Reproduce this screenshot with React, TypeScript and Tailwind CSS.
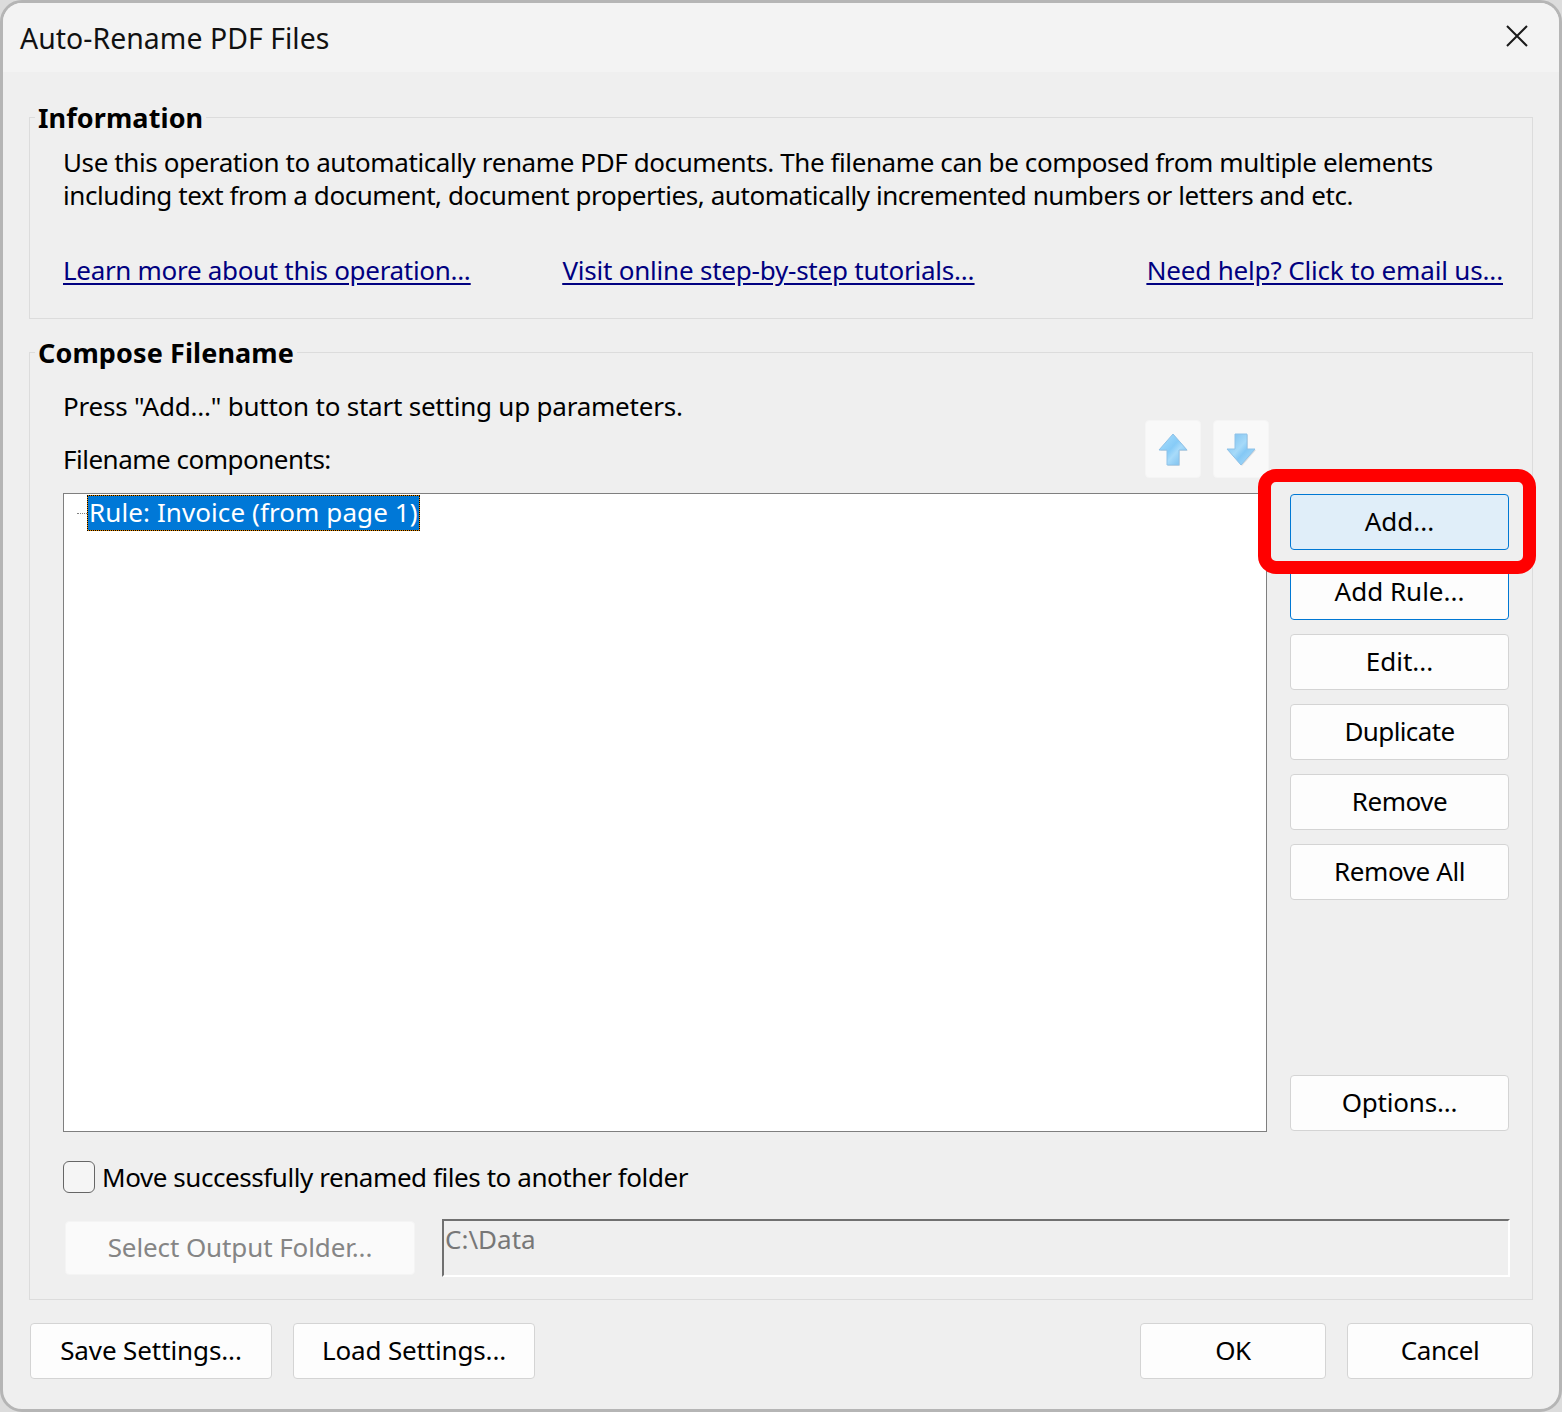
const btn = "flex items-center justify-center rounded-[4px] border border-[#d4d4d4] bg-[#fdfdfd] text-black h-[56px] pb-[2px]";

function ArrowUp() {
  const d = "M15 1 L29 17 L21 17 L21 32 L9 32 L9 17 L1 17 Z";
  return (
    <svg width="30" height="33" viewBox="0 0 30 33">
      <defs>
        <linearGradient id="au" x1="0" y1="0" x2="1" y2="1">
          <stop offset="0" stopColor="#aee0fd" />
          <stop offset="0.45" stopColor="#86cbf7" />
          <stop offset="0.6" stopColor="#a8dbfa" />
          <stop offset="1" stopColor="#6cb6ea" />
        </linearGradient>
      </defs>
      <path d={d} fill="#000" opacity="0.1" transform="translate(1 1)" />
      <path d={d} fill="url(#au)" stroke="#8fc2e8" strokeWidth="1" strokeLinejoin="round" />
    </svg>
  );
}

function ArrowDown() {
  const d = "M9 1 L21 1 L21 16 L29 16 L15 32 L1 16 L9 16 Z";
  return (
    <svg width="30" height="33" viewBox="0 0 30 33">
      <defs>
        <linearGradient id="ad" x1="0" y1="0" x2="1" y2="1">
          <stop offset="0" stopColor="#78bdee" />
          <stop offset="0.45" stopColor="#a6daf9" />
          <stop offset="0.6" stopColor="#84c8f5" />
          <stop offset="1" stopColor="#b6e2fc" />
        </linearGradient>
      </defs>
      <path d={d} fill="#000" opacity="0.1" transform="translate(1 1)" />
      <path d={d} fill="url(#ad)" stroke="#8fc2e8" strokeWidth="1" strokeLinejoin="round" />
    </svg>
  );
}

function Legend({ children }: { children: string }) {
  return (
    <div className="absolute left-[5px] top-[-18px] bg-[#efefef] px-[3px] text-[27px] tracking-[0.1px] leading-[36px] font-bold text-black">
      {children}
    </div>
  );
}

export default function App() {
  return (
    <div className="w-[1562px] h-[1412px] bg-[#dcdcdc] font-['Noto_Sans',sans-serif] text-[26px] tracking-[-0.43px] text-black overflow-hidden relative">
      <div className="w-[1562px] h-[1412px] rounded-[22px] border-[3px] border-[#b5b5b5] bg-[#efefef] flex flex-col overflow-hidden">
        <div className="h-[69px] shrink-0 bg-[#f3f3f3] flex items-center justify-between pl-[17px] pr-[31px]">
          <span className="text-[28.4px] tracking-[0.05px] leading-[70px] text-[#111]">Auto-Rename PDF Files</span>
          <svg width="22" height="22" viewBox="0 0 22 22" className="mt-[-3px]">
            <path d="M1 1 L21 21 M21 1 L1 21" stroke="#1a1a1a" strokeWidth="2" fill="none" />
          </svg>
        </div>
        <div className="flex flex-col pl-[26px] pr-[26px] pt-[45px]">
          <section className="relative h-[202px] border border-[#dcdcdc] pl-[33px] pr-[29px] pt-[28px]">
            <Legend>Information</Legend>
            <p className="leading-[33px] whitespace-nowrap">
              <span className="tracking-[-0.4px]">
                Use this operation to automatically rename PDF documents. The filename can be composed from multiple elements
              </span>
              <br />
              including text from a document, document properties, automatically incremented numbers or letters and etc.
            </p>
            <div className="mt-[42px] flex leading-[33px] text-[#000080] underline underline-offset-[3px]">
              <a className="tracking-[-0.31px]">Learn more about this operation...</a>
              <a className="ml-[92px] tracking-[-0.22px]">Visit online step-by-step tutorials...</a>
              <a className="ml-auto tracking-[-0.16px]">Need help? Click to email us...</a>
            </div>
          </section>

          <section className="relative mt-[33px] h-[948px] border border-[#dcdcdc] pl-[33px] pr-[23px]">
            <Legend>Compose Filename</Legend>
            <div className="h-[140px] flex justify-between pr-[240px]">
              <div className="pt-[37px] leading-[33px]">
                <div className="tracking-[-0.22px]">Press "Add..." button to start setting up parameters.</div>
                <div className="mt-[20px] tracking-[-0.5px]">Filename components:</div>
              </div>
              <div className="flex gap-[12px] pt-[67px]">
                <div className="w-[56px] h-[58px] rounded-[4px] bg-[#f9f9f9] border border-[#f5f5f5] flex items-center justify-center">
                  <ArrowUp />
                </div>
                <div className="w-[56px] h-[58px] rounded-[4px] bg-[#f9f9f9] border border-[#f5f5f5] flex items-center justify-center">
                  <ArrowDown />
                </div>
              </div>
            </div>

            <div className="flex justify-between">
              <div className="w-[1204px] h-[639px] border border-[#7f7f7f] bg-white pt-[1px] pl-[13px]">
                <div className="flex items-center">
                  <div className="w-[10px] border-t border-dotted border-[#808080]" />
                  <div className="h-[36px] w-[333px] border border-dotted border-black bg-[#e68a00] whitespace-nowrap">
                    <div className="h-full bg-[#0078d7] text-white leading-[32px] pl-[1px] tracking-[0.09px]">
                      Rule: Invoice (from page 1)
                    </div>
                  </div>
                </div>
              </div>
              <div className="w-[219px] h-[637px] mt-[1px] flex flex-col justify-between">
                <div className="flex flex-col gap-[14px]">
                  <div className={`${btn} !bg-[#e0eef9] !border-[#0078d4] tracking-[0px]`}>Add...</div>
                  <div className={`${btn} !border-[#0078d4] tracking-[0px]`}>Add Rule...</div>
                  <div className={`${btn} tracking-[0px]`}>Edit...</div>
                  <div className={`${btn} tracking-[-0.6px]`}>Duplicate</div>
                  <div className={btn}>Remove</div>
                  <div className={`${btn} tracking-[-0.4px]`}>Remove All</div>
                </div>
                <div className={`${btn} tracking-[-0.2px]`}>Options...</div>
              </div>
            </div>

            <div className="mt-[27px] flex items-center gap-[7px] leading-[33px]">
              <div className="w-[32px] h-[32px] rounded-[6px] border border-[#666] bg-[#f5f5f5]" />
              <span className="pt-[2px]">Move successfully renamed files to another folder</span>
            </div>

            <div className="mt-[25px] flex items-start justify-between">
              <div className="ml-[2px] mt-[2px] w-[350px] h-[54px] rounded-[4px] bg-[#fafafa] border border-[#f4f4f4] flex items-center justify-center pb-[2px] text-[#858585] tracking-[-0.1px]">
                Select Output Folder...
              </div>
              <div className="mr-[-1px] w-[1068px] h-[58px] border-2 border-t-[#707070] border-l-[#707070] border-r-white border-b-white bg-[#efefef] pl-[1px] leading-[36px] text-[#777] tracking-[0px]">
                C:\Data
              </div>
            </div>
          </section>

          <div className="mt-[23px] flex pl-[1px]">
            <div className={`${btn} w-[242px] tracking-[-0.1px]`}>Save Settings...</div>
            <div className={`${btn} w-[242px] ml-[21px] tracking-[-0.15px]`}>Load Settings...</div>
            <div className={`${btn} w-[186px] ml-auto`}>OK</div>
            <div className={`${btn} w-[186px] ml-[21px]`}>Cancel</div>
          </div>
        </div>
      </div>
      <div className="absolute left-[1258px] top-[469px] w-[278px] h-[105px] rounded-[18px] border-[13px] border-[#ff0000]" />
    </div>
  );
}
